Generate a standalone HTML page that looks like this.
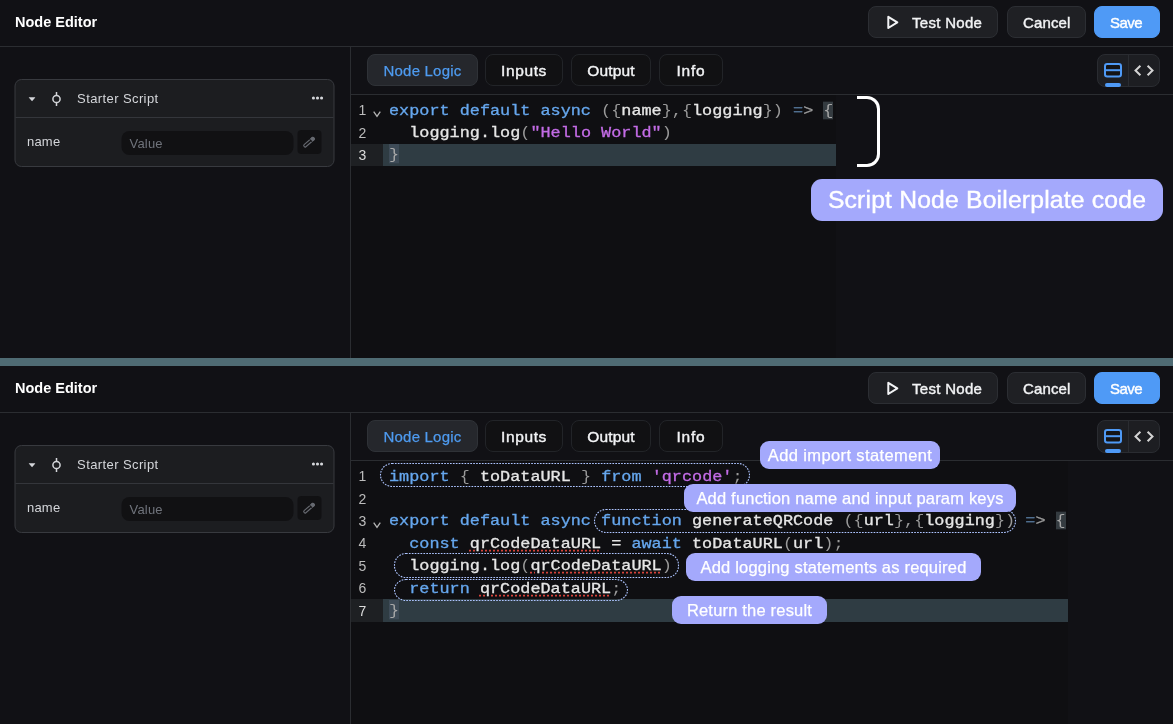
<!DOCTYPE html>
<html>
<head>
<meta charset="utf-8">
<style>
*{box-sizing:border-box;margin:0;padding:0}
html,body{width:1173px;height:724px;overflow:hidden;background:#111115;font-family:"Liberation Sans",sans-serif;color:#edeef0}
.panel{will-change:transform;position:absolute;left:0;width:1173px;height:358px;background:#111115;overflow:hidden}
.sep{position:absolute;left:0;top:358px;width:1173px;height:8px;background:#4f6b73}
.hdr{position:absolute;left:0;top:0;width:1173px;height:47px;border-bottom:1px solid #2b2d31}
.title{position:absolute;left:15px;top:14px;font-size:14.5px;font-weight:bold;color:#fff;line-height:17px}
.btn{position:absolute;top:6px;height:32px;border-radius:8px;background:#1f2024;border:1px solid #2c2e33;color:#f2f3f5;font-size:15px;line-height:31px;-webkit-text-stroke:0.4px;letter-spacing:0.3px;white-space:nowrap}
.btn span{position:absolute;top:0}
.btn.save{background:#4f9af6;border-color:#4f9af6;color:#fff}
.side{position:absolute;left:0;top:47px;width:351px;height:311px;border-right:1px solid #2b2d31}
.card{transform:translateX(-0.5px);position:absolute;left:15px;top:32px;width:320px;height:88px;border:1px solid #383a3f;border-radius:7px;background:#1c1d20}
.card .ch{position:absolute;left:0;top:0;width:100%;height:38px;border-bottom:1px solid #34363b}
.card .ct{position:absolute;left:61.6px;top:11px;font-size:13px;color:#d4d6da;letter-spacing:0.4px}
.card .nm{position:absolute;left:11.5px;top:54px;font-size:13px;color:#d4d6da;letter-spacing:0.2px}
.card .inp{position:absolute;left:106px;top:51px;width:172px;height:24px;border-radius:8px;background:#111113;color:#6f737b;font-size:13px;line-height:25px;padding-left:8px;letter-spacing:0.2px}
.card .eb{position:absolute;left:282px;top:50px;width:24px;height:24px;border-radius:4px;background:#111113}
.tabs{position:absolute;left:351px;top:47px;width:822px;height:48px;border-bottom:1px solid #2b2d31}
.tab{position:absolute;top:7px;height:32px;border-radius:8px;border:1px solid #222428;font-size:15.5px;color:#f2f3f5;line-height:31px;text-align:center;background:#111113;-webkit-text-stroke:0.4px;letter-spacing:0.3px}
.tab.act{background:#25272c;border-color:#2f3237;color:#4e9bf0;-webkit-text-stroke:0.25px;letter-spacing:0.2px;font-size:15px}
.tog{position:absolute;left:746px;top:7px;width:63px;height:33px;border-radius:8px;background:#1d1e22;border:1px solid #2a2c31}
.tog .dv{position:absolute;left:30px;top:0;width:1px;height:31px;background:#2a2c31}
.ed{position:absolute;left:351px;top:95px;height:263px;background:#0f0f12}
.ln{position:absolute;left:0;height:22.4px;width:100%;font-family:"Liberation Mono",monospace;font-size:16.83px;line-height:22.4px;white-space:pre;color:#e6e6e6}
.ln .n{position:absolute;left:0;width:15.2px;text-align:right;top:0.3px;color:#bcbcbc;font-size:14px;font-family:"Liberation Sans",sans-serif}
.ln .c{transform:scaleY(0.84);transform-origin:0 15.7px;position:absolute;z-index:0;left:38px;top:0.5px;-webkit-text-stroke:0.35px}
.ln.hl{background:#2f3c43}
.ln.hl .n{color:#dcdcdc}
.ln.hl:before{content:"";position:absolute;left:0;top:0;width:32px;height:100%;background:#1e2023}
.k{color:#66a7ee}.s{color:#c36ce6}.p{color:#9a9a9a;-webkit-text-stroke:0}.br{position:relative;color:#a8a8a8;-webkit-text-stroke:0}.br:before{content:'';position:absolute;z-index:-1;left:0;right:0;top:-2.32px;height:21.79px;background:#343b40}.hl .br:before{background:#3e4b57;top:-3.62px;height:22.14px}.eq{color:#4f6f90;-webkit-text-stroke:0.35px}.gt{color:#9a9a9a;-webkit-text-stroke:0.3px}
.fold{position:absolute;left:22px;top:11px;width:8px;height:8px}
.lbl{position:absolute;background:#a4a9fc;color:#fff;border-radius:9px;font-size:16.5px;line-height:28px;height:28px;text-align:center;letter-spacing:0.19px;white-space:nowrap;-webkit-text-stroke:0.25px}
.dot{position:absolute;border:1px dotted #8ea0ff;border-radius:10px}
u{text-decoration:underline dotted #d4433a;text-underline-offset:1.6px;text-decoration-thickness:1.6px}
</style>
</head>
<body>
<div class="panel" style="top:0">
  <div class="hdr">
    <div class="title">Node Editor</div>
    <div class="btn" style="left:868px;width:130px"><span style="left:43px">Test Node</span>
      <svg style="position:absolute;left:17px;top:7.4px" width="14" height="16" viewBox="0 0 14 16"><path d="M2.3 2.8 L11.3 8.4 L2.3 14 Z" fill="none" stroke="#f2f3f5" stroke-width="2" stroke-linejoin="round"/></svg>
    </div>
    <div class="btn" style="left:1007px;width:79px"><span style="left:15px;letter-spacing:0.15px">Cancel</span></div>
    <div class="btn save" style="left:1094px;width:66px"><span style="left:15px;letter-spacing:-0.5px">Save</span></div>
  </div>
  <div class="side">
    <div class="card">
      <div class="ch">
        <svg style="position:absolute;left:12.5px;top:16.7px" width="7" height="5" viewBox="0 0 7 5"><path d="M0 0.3 L7 0.3 L3.5 4.3 Z" fill="#d4d6da"/></svg>
        <svg style="position:absolute;left:34.5px;top:9.5px" width="12" height="18" viewBox="0 0 12 18"><circle cx="6" cy="9" r="3.6" fill="none" stroke="#d4d6da" stroke-width="1.5"/><path d="M6 1.9 V5.4 M6 12.6 V16.1" stroke="#d4d6da" stroke-width="1.5"/></svg>
        <div class="ct">Starter Script</div>
        <svg style="position:absolute;left:296.4px;top:16.1px" width="12" height="4" viewBox="0 0 12 4"><circle cx="1.93" cy="2" r="1.55" fill="#d4d6da"/><circle cx="6" cy="2" r="1.55" fill="#d4d6da"/><circle cx="10.07" cy="2" r="1.55" fill="#d4d6da"/></svg>
      </div>
      <div class="nm">name</div>
      <div class="inp">Value</div>
      <div class="eb"><svg style="position:absolute;left:0;top:0" width="24" height="24" viewBox="0 0 24 24"><g transform="translate(11.5 12.2) rotate(-41)" fill="none" stroke="#666970" stroke-width="1.15"><rect x="-6.4" y="-1.35" width="12.8" height="2.7" rx="1.1"/><rect x="3.6" y="-1.35" width="2.8" height="2.7" rx="0.8" fill="#666970"/><path d="M2.5 -1.9 V1.9" stroke="#111113" stroke-width="0.9"/></g></svg></div>
    </div>
  </div>
  <div class="tabs">
    <div class="tab act" style="left:16px;width:111px">Node Logic</div>
    <div class="tab" style="left:134px;width:78px;letter-spacing:0.6px">Inputs</div>
    <div class="tab" style="left:220px;width:80px;letter-spacing:0.15px">Output</div>
    <div class="tab" style="left:308px;width:64px;letter-spacing:0.8px">Info</div>
    <div class="tog"><div class="dv"></div>
      <svg style="position:absolute;left:6px;top:8.3px" width="18" height="15" viewBox="0 0 18 15"><rect x="1" y="1" width="16" height="12.4" rx="2.2" fill="#141416" stroke="#4f9af6" stroke-width="2"/><path d="M1 7.2 H17" stroke="#4f9af6" stroke-width="2"/></svg>
      <div style="position:absolute;left:7px;top:28.3px;width:16px;height:3.3px;border-radius:2px;background:#4f9af6"></div>
      <svg style="position:absolute;left:35px;top:9px" width="22" height="13" viewBox="0 0 22 13"><path d="M7.4 1.8 L2.5 6.55 L7.4 11.3 M14.6 1.8 L19.5 6.55 L14.6 11.3" fill="none" stroke="#d4d4d4" stroke-width="2"/></svg>
    </div>
  </div>
  <div class="ed" style="width:485px">
    <div class="ln" style="top:4.0px"><span class="n">1</span><svg class="fold" viewBox="0 0 8 8"><path d="M0.7 1.7 L4 6.3 L7.3 1.7" fill="none" stroke="#b4b4b4" stroke-width="1.3"/></svg><span class="c"><span class="k">export default async</span> <span class="p">({</span>name<span class="p">},{</span>logging<span class="p">})</span> <span class="eq">=</span><span class="gt">&gt;</span> <span class="br">{</span></span></div>
    <div class="ln" style="top:26.4px"><span class="n">2</span><span class="c">  logging.log<span class="p">(</span><span class="s">"Hello World"</span><span class="p">)</span></span></div>
    <div class="ln hl" style="top:48.8px"><span class="n">3</span><span class="c"><span class="br">}</span></span></div>
  </div>

  <div style="position:absolute;left:857px;top:96px;width:23px;height:71px;border:3.3px solid #fff;border-left:none;border-radius:0 13px 13px 0"></div>
  <div class="lbl" style="left:811px;top:179px;width:352px;height:42px;line-height:42px;font-size:24.7px;border-radius:11px;-webkit-text-stroke:0.4px">Script Node Boilerplate code</div>
</div>
<div class="sep"></div>
<div class="panel" style="top:366px">
  <div class="hdr">
    <div class="title">Node Editor</div>
    <div class="btn" style="left:868px;width:130px"><span style="left:43px">Test Node</span>
      <svg style="position:absolute;left:17px;top:7.4px" width="14" height="16" viewBox="0 0 14 16"><path d="M2.3 2.8 L11.3 8.4 L2.3 14 Z" fill="none" stroke="#f2f3f5" stroke-width="2" stroke-linejoin="round"/></svg>
    </div>
    <div class="btn" style="left:1007px;width:79px"><span style="left:15px;letter-spacing:0.15px">Cancel</span></div>
    <div class="btn save" style="left:1094px;width:66px"><span style="left:15px;letter-spacing:-0.5px">Save</span></div>
  </div>
  <div class="side">
    <div class="card">
      <div class="ch">
        <svg style="position:absolute;left:12.5px;top:16.7px" width="7" height="5" viewBox="0 0 7 5"><path d="M0 0.3 L7 0.3 L3.5 4.3 Z" fill="#d4d6da"/></svg>
        <svg style="position:absolute;left:34.5px;top:9.5px" width="12" height="18" viewBox="0 0 12 18"><circle cx="6" cy="9" r="3.6" fill="none" stroke="#d4d6da" stroke-width="1.5"/><path d="M6 1.9 V5.4 M6 12.6 V16.1" stroke="#d4d6da" stroke-width="1.5"/></svg>
        <div class="ct">Starter Script</div>
        <svg style="position:absolute;left:296.4px;top:16.1px" width="12" height="4" viewBox="0 0 12 4"><circle cx="1.93" cy="2" r="1.55" fill="#d4d6da"/><circle cx="6" cy="2" r="1.55" fill="#d4d6da"/><circle cx="10.07" cy="2" r="1.55" fill="#d4d6da"/></svg>
      </div>
      <div class="nm">name</div>
      <div class="inp">Value</div>
      <div class="eb"><svg style="position:absolute;left:0;top:0" width="24" height="24" viewBox="0 0 24 24"><g transform="translate(11.5 12.2) rotate(-41)" fill="none" stroke="#666970" stroke-width="1.15"><rect x="-6.4" y="-1.35" width="12.8" height="2.7" rx="1.1"/><rect x="3.6" y="-1.35" width="2.8" height="2.7" rx="0.8" fill="#666970"/><path d="M2.5 -1.9 V1.9" stroke="#111113" stroke-width="0.9"/></g></svg></div>
    </div>
  </div>
  <div class="tabs">
    <div class="tab act" style="left:16px;width:111px">Node Logic</div>
    <div class="tab" style="left:134px;width:78px;letter-spacing:0.6px">Inputs</div>
    <div class="tab" style="left:220px;width:80px;letter-spacing:0.15px">Output</div>
    <div class="tab" style="left:308px;width:64px;letter-spacing:0.8px">Info</div>
    <div class="tog"><div class="dv"></div>
      <svg style="position:absolute;left:6px;top:8.3px" width="18" height="15" viewBox="0 0 18 15"><rect x="1" y="1" width="16" height="12.4" rx="2.2" fill="#141416" stroke="#4f9af6" stroke-width="2"/><path d="M1 7.2 H17" stroke="#4f9af6" stroke-width="2"/></svg>
      <div style="position:absolute;left:7px;top:28.3px;width:16px;height:3.3px;border-radius:2px;background:#4f9af6"></div>
      <svg style="position:absolute;left:35px;top:9px" width="22" height="13" viewBox="0 0 22 13"><path d="M7.4 1.8 L2.5 6.55 L7.4 11.3 M14.6 1.8 L19.5 6.55 L14.6 11.3" fill="none" stroke="#d4d4d4" stroke-width="2"/></svg>
    </div>
  </div>
  <div class="ed" style="width:717px">
    <div class="ln" style="top:4.0px"><span class="n">1</span><span class="c"><span class="k">import</span> <span class="p">{</span> toDataURL <span class="p">}</span> <span class="k">from</span> <span class="s">'qrcode'</span><span class="p">;</span></span></div>
    <div class="ln" style="top:26.4px"><span class="n">2</span><span class="c"></span></div>
    <div class="ln" style="top:48.8px"><span class="n">3</span><svg class="fold" viewBox="0 0 8 8"><path d="M0.7 1.7 L4 6.3 L7.3 1.7" fill="none" stroke="#b4b4b4" stroke-width="1.3"/></svg><span class="c"><span class="k">export default async</span> <span class="k">function</span> generateQRCode <span class="p">({</span>url<span class="p">},{</span>logging<span class="p">})</span> <span class="eq">=</span><span class="gt">&gt;</span> <span class="br">{</span></span></div>
    <div class="ln" style="top:71.2px"><span class="n">4</span><span class="c">  <span class="k">const</span> <u>qrCodeDataURL</u> = <span class="k">await</span> toDataURL<span class="p">(</span>url<span class="p">);</span></span></div>
    <div class="ln" style="top:93.6px"><span class="n">5</span><span class="c">  logging.log<span class="p">(</span><u>qrCodeDataURL</u><span class="p">)</span></span></div>
    <div class="ln" style="top:116.0px"><span class="n">6</span><span class="c">  <span class="k">return</span> <u>qrCodeDataURL</u><span class="p">;</span></span></div>
    <div class="ln hl" style="top:138.4px"><span class="n">7</span><span class="c"><span class="br">}</span></span></div>
  </div>

  <svg style="position:absolute;left:0;top:0" width="1173" height="358" viewBox="0 0 1173 358" fill="none" stroke="#adc4ff" stroke-width="1.1" stroke-dasharray="1.7 1.2"><rect x="380.5" y="97.5" width="369.0" height="23.0" rx="11.5"/><rect x="594.5" y="143.5" width="421.0" height="23.0" rx="11.5"/><rect x="394.5" y="187.5" width="284.0" height="24.0" rx="11.5"/><rect x="394.5" y="213.5" width="233.0" height="21.0" rx="11.5"/></svg>
  <div class="lbl" style="left:760px;top:75px;width:180px;letter-spacing:0.38px">Add import statement</div>
  <div class="lbl" style="left:684px;top:118px;width:332px">Add function name and input param keys</div>
  <div class="lbl" style="left:686px;top:187px;width:295px">Add logging statements as required</div>
  <div class="lbl" style="left:672px;top:230px;width:155px">Return the result</div>
</div>
</body>
</html>
